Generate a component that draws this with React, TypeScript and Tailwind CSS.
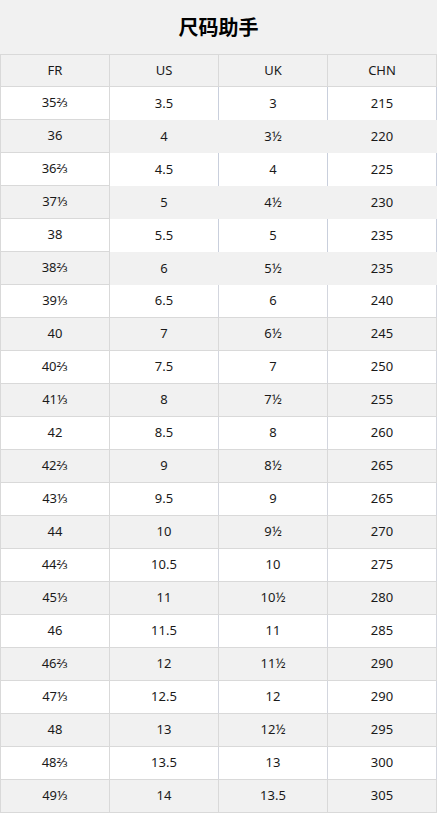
import React from "react";

const FR = ["35⅔","36","36⅔","37⅓","38","38⅔","39⅓","40","40⅔","41⅓","42","42⅔","43⅓","44","44⅔","45⅓","46","46⅔","47⅓","48","48⅔","49⅓"];
const US = ["3.5","4","4.5","5","5.5","6","6.5","7","7.5","8","8.5","9","9.5","10","10.5","11","11.5","12","12.5","13","13.5","14"];
const UK = ["3","3½","4","4½","5","5½","6","6½","7","7½","8","8½","9","9½","10","10½","11","11½","12","12½","13","13.5"];
const CHN = ["215","220","225","230","235","235","240","245","250","255","260","265","265","270","275","280","285","290","290","295","300","305"];

export default function App() {
  return (
    <div className="w-[437px] h-[815px] bg-white font-['Noto_Sans','Noto_Sans_CJK_SC',sans-serif] text-[13px] text-[#1a1a1a]">
      <div className="h-[54px] bg-[#f1f1f1] flex items-center justify-center">
        <h1 className="text-[20px] font-bold text-black font-['Noto_Sans_CJK_SC','Noto_Sans',sans-serif]">尺码助手</h1>
      </div>
      <div className="grid grid-cols-[110px_109px_109px_109px]">
        {["FR", "US", "UK", "CHN"].map((h, i) => (
          <div
            key={h}
            className={
              "h-[33px] flex items-center justify-center bg-[#f1f1f1] border-t border-b border-r border-[#d9d9d9] " +
              (i === 0 ? "border-l" : "")
            }
          >
            {h}
          </div>
        ))}
        {FR.map((fr, r) => {
          const gray = r % 2 === 1;
          const special = r < 6;
          const bg = gray ? "bg-[#f1f1f1]" : "bg-white";
          const rest = [US[r], UK[r], CHN[r]];
          return (
            <React.Fragment key={r}>
              <div className={"h-[33px] flex items-center justify-center border-l border-r border-b border-[#d9d9d9] " + bg}>
                {fr}
              </div>
              {rest.map((v, c) => {
                let cls = "h-[33px] flex items-center justify-center border-r " + bg + " ";
                if (special) {
                  cls += gray ? "border-[#f1f1f1]" : "border-[#c9cfdc]";
                } else {
                  cls += "border-b " + (gray ? "border-[#d9d9d9]" : "border-b-[#d9d9d9] border-r-[#d3d6de]");
                }
                return (
                  <div key={c} className={cls}>
                    {v}
                  </div>
                );
              })}
            </React.Fragment>
          );
        })}
      </div>
    </div>
  );
}
